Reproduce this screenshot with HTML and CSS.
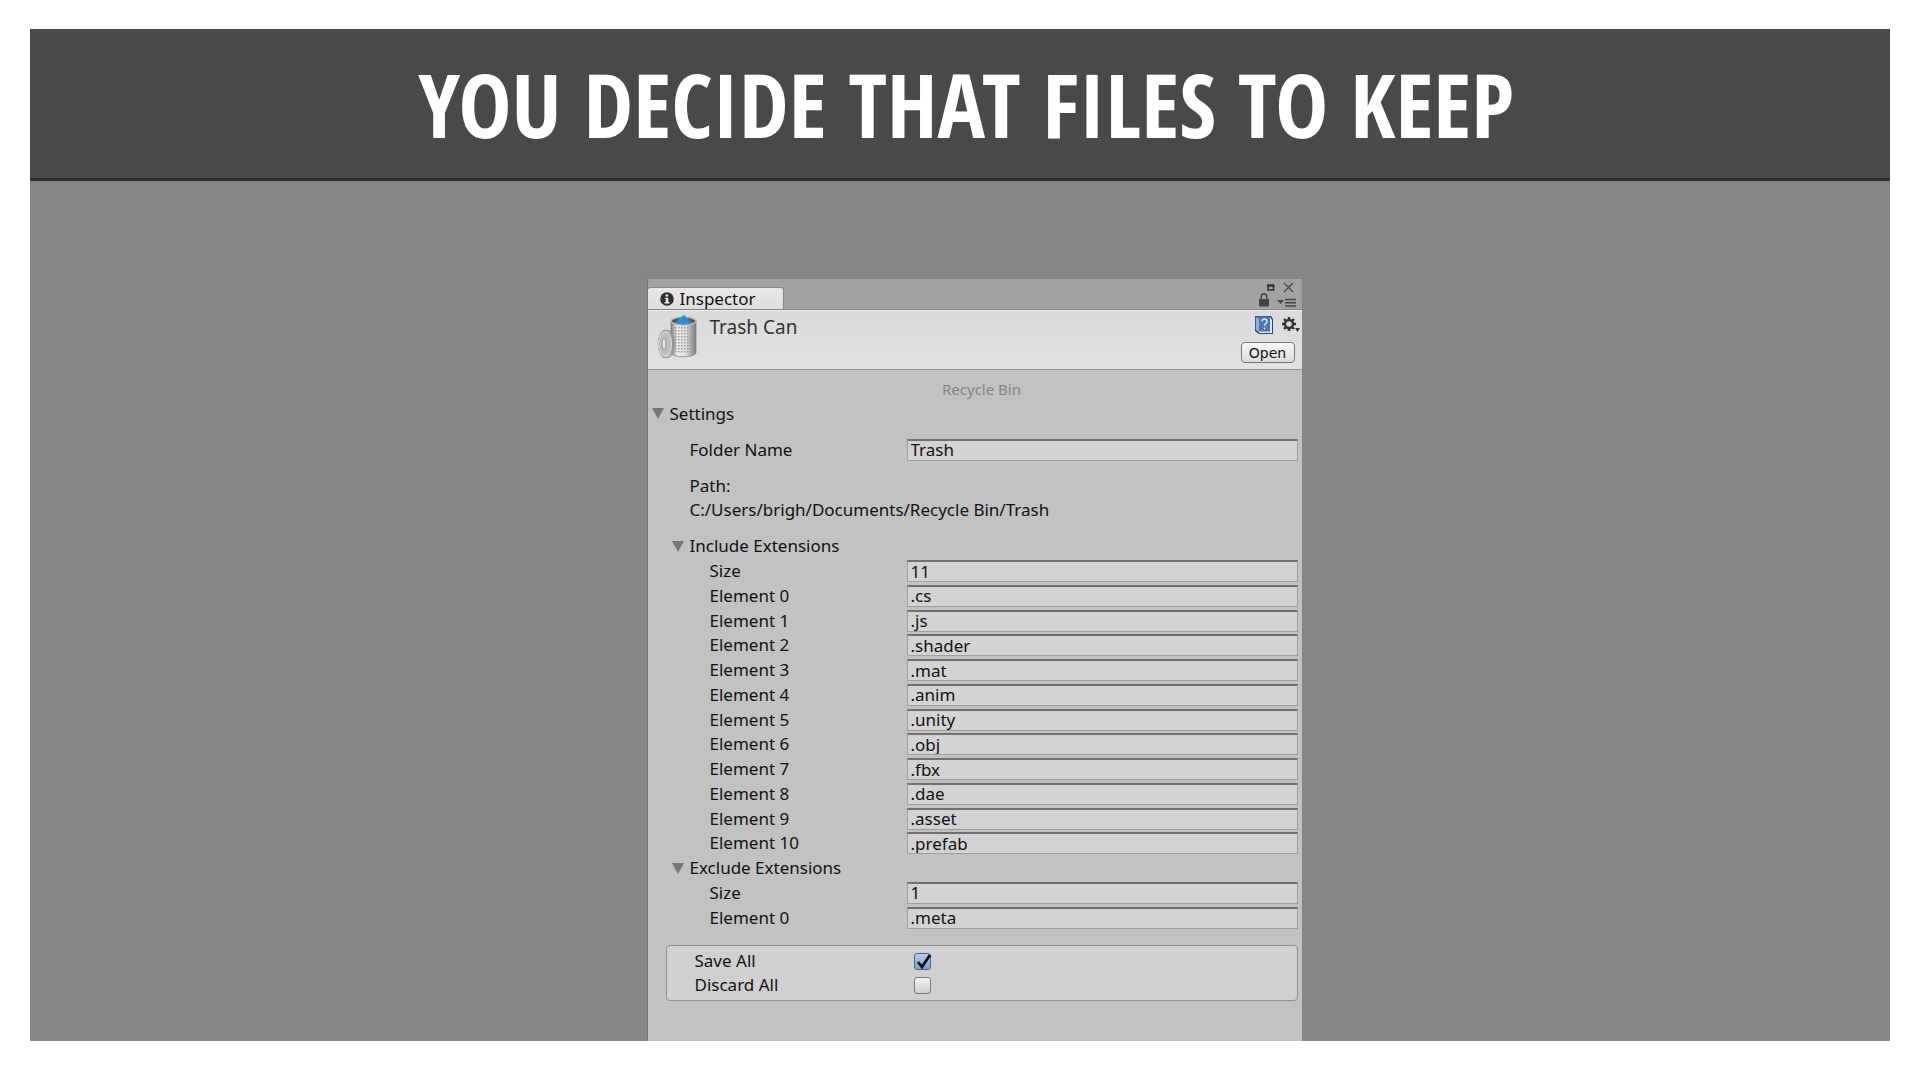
FILE: index.html
```
<!DOCTYPE html>
<html lang="en">
<head>
<meta charset="utf-8">
<title>Recycle Bin settings</title>
<link rel="stylesheet" href="styles.css">
</head>
<body>
<main class="slide">
  <header class="banner"><h1 class="headline">YOU DECIDE THAT FILES TO KEEP</h1></header>
  <div class="stage">
    <section class="inspector" aria-label="Inspector">
      <div class="tabbar">
        <div class="tab">
          <svg class="info" viewBox="0 0 14 14" width="14" height="14" aria-hidden="true"><circle cx="7" cy="7" r="6.8" fill="#303030"/><path d="M5.6 2.5h2.6v2H5.6zM4.8 5.7h3.5v4.4h1.2v1.4H4.6v-1.4h1.2V7.100h-1z" fill="#eee"/></svg>
          <span>Inspector</span>
        </div>
        <svg class="window-icons" viewBox="0 0 40 28" width="40" height="28" aria-hidden="true">
          <path d="M9 3.500h5.500v4.500H9z" fill="none" stroke="#333" stroke-width="1.600"/><path d="M8.200 3.500h7" stroke="#333" stroke-width="2.400"/>
          <path d="M25 1l9 9M34 1l-9 9" stroke="#444" stroke-width="1.300"/>
          <rect x="0" y="17" width="10" height="7.500" fill="#444"/><path d="M2.300 17v-2.500a2.700 2.700 0 0 1 5.400 0V17" fill="none" stroke="#444" stroke-width="1.500"/>
          <path d="M18 18h7l-3.500 4z" fill="#444"/><path d="M26 17.500h11M26 20.800h11M26 24h11" stroke="#444" stroke-width="1.500"/>
        </svg>
      </div>
      <div class="asset">
        <svg class="bin" viewBox="0 0 42 44" width="42" height="44" aria-hidden="true">
          <defs>
            <linearGradient id="metal"><stop offset="0" stop-color="#777"/><stop offset=".25" stop-color="#eee"/><stop offset=".6" stop-color="#ddd"/><stop offset="1" stop-color="#777"/></linearGradient>
            <linearGradient id="lid"><stop offset="0" stop-color="#aaa"/><stop offset=".6" stop-color="#c8c8c8"/><stop offset="1" stop-color="#888"/></linearGradient>
            <pattern id="mesh" width="3" height="3" patternUnits="userSpaceOnUse"><rect width="1.500" height="1.500" fill="#999"/></pattern>
          </defs>
          <path d="M14 6v32c2 5 23 5 25 0V6z" fill="url(#metal)" stroke="#888" stroke-width=".8"/>
          <path d="M17 11h20v25c-5 3-15 3-20 0z" fill="url(#mesh)"/>
          <ellipse cx="26.500" cy="6" rx="12.500" ry="4" fill="#555" stroke="#bbb" stroke-width="1.500"/>
          <path d="M18 8l4-4 5-4 4 4 4 4q-8 3-17 0z" fill="#2d8fd0"/>
          <path d="M7 16c4-4 11 2 11 12s-4 15-8 15z" fill="#999"/>
          <ellipse cx="9" cy="29" rx="8" ry="14" fill="url(#lid)" stroke="#999"/>
          <ellipse cx="8" cy="29" rx="6.500" ry="12" fill="#bdbdbd" stroke="#ddd"/>
          <ellipse cx="7" cy="29" rx="2" ry="6" fill="#e8e8e8" stroke="#888"/>
        </svg>
        <h2 class="asset-name">Trash Can</h2>
        <div class="asset-tools">
          <svg class="tool-icons" viewBox="0 0 46 20" width="46" height="20" aria-hidden="true">
            <path d="M1 1h16l2 3v15H5l-4-3z" fill="#26456e"/><path d="M4 3.500l12-1.500 2 3v13H5z" fill="#dce4ee"/><path d="M3 1.500h13v15H5l-2-2z" fill="#4d76aa"/><path d="M1.800 2L5 4v13l-3.200-2z" fill="#8fb0d8"/>
            <path d="M8 6.500q0-2.500 2.500-2.500t2.500 2.500q0 1.500-1.500 2.300-1 .7-1 2M10.500 12.500v1.800" fill="none" stroke="#dfe9f6" stroke-width="1.400"/>
            <circle cx="35" cy="9" r="4" fill="none" stroke="#333" stroke-width="2.400"/>
            <path d="M35 2v2.500M35 13.500V16M28 9h2.500M39.500 9H42M30 4l2 2M38 12l2 2M40 4l-2 2M32 12l-2 2" stroke="#333" stroke-width="2.400"/>
            <path d="M41 13h5l-2.500 4z" fill="#333"/>
          </svg>
          <button class="open" type="button">Open</button>
        </div>
      </div>
      <form class="fields">
        <p class="caption">Recycle Bin</p>
        <div class="row"><span class="fold">Settings</span></div>
        <div class="row spaced level1"><label for="folder">Folder Name</label><input id="folder" type="text" value="Trash"></div>
        <div class="row level1 path-label">Path:</div>
        <div class="row level1 path">C:/Users/brigh/Documents/Recycle Bin/Trash</div>
        <div class="extensions">
          <div class="row level1"><span class="fold">Include Extensions</span></div>
          <div class="row level2"><label for="isize">Size</label><input id="isize" type="text" value="11"></div>
          <div class="row level2"><label for="i0">Element 0</label><input id="i0" type="text" value=".cs"></div>
          <div class="row level2"><label for="i1">Element 1</label><input id="i1" type="text" value=".js"></div>
          <div class="row level2"><label for="i2">Element 2</label><input id="i2" type="text" value=".shader"></div>
          <div class="row level2"><label for="i3">Element 3</label><input id="i3" type="text" value=".mat"></div>
          <div class="row level2"><label for="i4">Element 4</label><input id="i4" type="text" value=".anim"></div>
          <div class="row level2"><label for="i5">Element 5</label><input id="i5" type="text" value=".unity"></div>
          <div class="row level2"><label for="i6">Element 6</label><input id="i6" type="text" value=".obj"></div>
          <div class="row level2"><label for="i7">Element 7</label><input id="i7" type="text" value=".fbx"></div>
          <div class="row level2"><label for="i8">Element 8</label><input id="i8" type="text" value=".dae"></div>
          <div class="row level2"><label for="i9">Element 9</label><input id="i9" type="text" value=".asset"></div>
          <div class="row level2"><label for="i10">Element 10</label><input id="i10" type="text" value=".prefab"></div>
          <div class="row level1"><span class="fold">Exclude Extensions</span></div>
          <div class="row level2"><label for="esize">Size</label><input id="esize" type="text" value="1"></div>
          <div class="row level2"><label for="e0">Element 0</label><input id="e0" type="text" value=".meta"></div>
        </div>
        <div class="choices">
          <div class="choice"><label for="save">Save All</label><span class="tick"><input id="save" type="checkbox" checked><svg class="mark" viewBox="0 0 18 18" width="18" height="18" aria-hidden="true"><path d="M4 9l4 5 8-12" fill="none" stroke="#111" stroke-width="2.800"/></svg></span></div>
          <div class="choice"><label for="discard">Discard All</label><span class="tick"><input id="discard" type="checkbox"></span></div>
        </div>
      </form>
    </section>
  </div>
</main>
</body>
</html>
```
FILE: styles.css
```
* { box-sizing: border-box; }
body {
  margin: 0;
  background: #fff;
  color: #111;
  font: 17px/24px "Noto Sans", "DejaVu Sans", sans-serif;
}
h1, h2, p { margin: 0; font-weight: 400; }
.slide {
  display: flex;
  flex-direction: column;
  min-height: 100vh;
  padding: 29px 30px 39px;
}
.banner {
  display: flex;
  align-items: center;
  justify-content: center;
  height: 152px;
  padding-left: 12px;
  background: #494949;
  border-bottom: 3px solid #303030;
}
.headline {
  color: #fff;
  font: 700 89px/120px "Open Sans Condensed", "Roboto Condensed", sans-serif;
  white-space: nowrap;
}
.stage {
  display: flex;
  flex: 1;
  justify-content: center;
  padding: 98px 0 0 28px;
  background: #868686;
}
.inspector {
  display: flex;
  flex-direction: column;
  width: 655px;
  background: #c2c2c2;
  border-left: 1px solid #777;
}
.tabbar {
  display: flex;
  justify-content: space-between;
  height: 31px;
  padding-right: 3px;
  background: #a2a2a2;
  border-bottom: 1px solid #808080;
}
.tab {
  display: flex;
  align-items: center;
  align-self: flex-end;
  gap: 6px;
  width: 136px;
  height: 22px;
  padding-left: 12px;
  background: linear-gradient(#e8e8e8, #dedede);
  border: 1px solid #888;
  border-width: 1px 1px 0 0;
  border-radius: 3px 3px 0 0;
}
.window-icons { margin-top: 3px; }
.asset {
  display: flex;
  height: 60px;
  padding: 4px 2px 4px 9px;
  background: linear-gradient(#dadada, #e2e2e2);
  border-top: 1px solid #eee;
  border-bottom: 1px solid #909090;
}
.asset-name { flex: 1; padding-left: 11px; font-size: 19px; line-height: 24px; color: #333; }
.asset-tools { display: flex; flex-direction: column; align-items: flex-end; gap: 7px; }
.open {
  width: 54px;
  height: 21px;
  margin-right: 5px;
  padding: 0;
  background: linear-gradient(#f8f8f8, #dcdcdc);
  border: 1px solid #777;
  border-radius: 4px;
  color: #111;
  font: 14px/18px "DejaVu Sans", sans-serif;
}
.fields { padding: 7px 4px 30px; }
.caption { padding-left: 14px; color: #858585; font-size: 15px; text-align: center; }
.row { display: flex; align-items: center; height: 25px; }
.spaced { margin: 11px 0 12px; }
.path-label, .path { height: 24px; }
.level1 { padding-left: 38px; }
.level2 { padding-left: 58px; }
.fold { display: flex; align-items: center; gap: 6px; }
.level1 .fold { margin-left: -18px; }
.fold::before {
  content: "";
  border: solid transparent;
  border-width: 11px 6px 0;
  border-top-color: #777;
}
.row > label { flex: 0 0 217px; }
.level2 > label { flex-basis: 197px; }
.row > input {
  flex: 1;
  min-width: 0;
  height: 22px;
  padding: 0 3px 1px;
  background: #d3d3d3;
  border: 1px solid #9f9f9f;
  border-top: 2px solid #707070;
  border-radius: 0;
  color: #111;
  font: inherit;
  line-height: 18px;
}
.extensions {
  display: grid;
  grid-auto-rows: 1fr;
  min-height: 396px;
  margin-top: 12px;
}
.extensions .row { height: auto; }
.choices {
  margin: 15px 0 0 14px;
  padding: 3px 0 3px 28px;
  background: #d0d0d0;
  border: 1px solid #909090;
  border-radius: 4px;
}
.choice { display: flex; align-items: center; height: 24px; }
.choice label { width: 219px; }
.tick { display: flex; position: relative; }
.tick input {
  appearance: none;
  width: 17px;
  height: 17px;
  margin: 0;
  background: linear-gradient(#f2f2f2, #cfcfcf);
  border: 1px solid #777;
  border-radius: 3px;
}
.tick input:checked { background: linear-gradient(#b5cdef, #7ba0d4); border-color: #4d6288; }
.mark { position: absolute; left: 0; top: 0; pointer-events: none; }
```
